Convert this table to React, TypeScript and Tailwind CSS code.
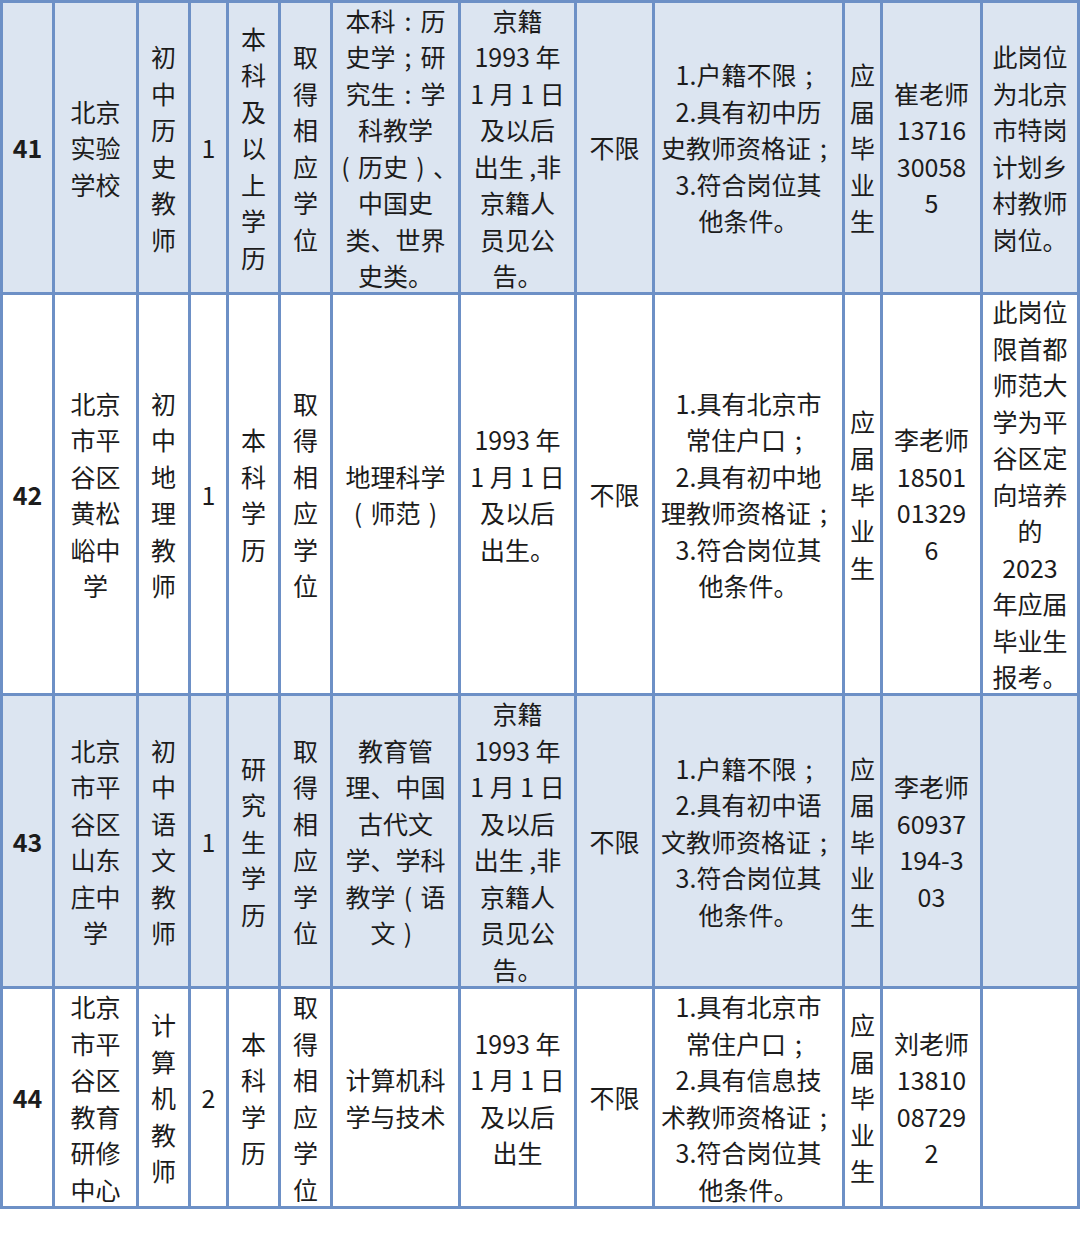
import { Fragment, type ReactNode } from "react";

type Cell = string[];

const chars = (s: string): Cell => s.split("");

interface Row {
  no: string;
  cells: Cell[];
  shaded: boolean;
}

const rows: Row[] = [
  {
    no: "41",
    shaded: true,
    cells: [
      ["北京", "实验", "学校"],
      chars("初中历史教师"),
      ["1"],
      chars("本科及以上学历"),
      chars("取得相应学位"),
      ["本科：历", "史学；研", "究生：学", "科教学", "（历史）、", "中国史", "类、世界", "史类。"],
      ["京籍", "1993 年", "1 月 1 日", "及以后", "出生 ,非", "京籍人", "员见公", "告。"],
      ["不限"],
      ["1.户籍不限；", "2.具有初中历", "史教师资格证；", "3.符合岗位其", "他条件。"],
      chars("应届毕业生"),
      ["崔老师", "13716", "30058", "5"],
      ["此岗位", "为北京", "市特岗", "计划乡", "村教师", "岗位。"],
    ],
  },
  {
    no: "42",
    shaded: false,
    cells: [
      ["北京", "市平", "谷区", "黄松", "峪中", "学"],
      chars("初中地理教师"),
      ["1"],
      chars("本科学历"),
      chars("取得相应学位"),
      ["地理科学", "（师范）"],
      ["1993 年", "1 月 1 日", "及以后", "出生。"],
      ["不限"],
      ["1.具有北京市", "常住户口；", "2.具有初中地", "理教师资格证；", "3.符合岗位其", "他条件。"],
      chars("应届毕业生"),
      ["李老师", "18501", "01329", "6"],
      ["此岗位", "限首都", "师范大", "学为平", "谷区定", "向培养", "的", "2023", "年应届", "毕业生", "报考。"],
    ],
  },
  {
    no: "43",
    shaded: true,
    cells: [
      ["北京", "市平", "谷区", "山东", "庄中", "学"],
      chars("初中语文教师"),
      ["1"],
      chars("研究生学历"),
      chars("取得相应学位"),
      ["教育管", "理、中国", "古代文", "学、学科", "教学（语", "文）"],
      ["京籍", "1993 年", "1 月 1 日", "及以后", "出生 ,非", "京籍人", "员见公", "告。"],
      ["不限"],
      ["1.户籍不限；", "2.具有初中语", "文教师资格证；", "3.符合岗位其", "他条件。"],
      chars("应届毕业生"),
      ["李老师", "60937", "194-3", "03"],
      [],
    ],
  },
  {
    no: "44",
    shaded: false,
    cells: [
      ["北京", "市平", "谷区", "教育", "研修", "中心"],
      chars("计算机教师"),
      ["2"],
      chars("本科学历"),
      chars("取得相应学位"),
      ["计算机科", "学与技术"],
      ["1993 年", "1 月 1 日", "及以后", "出生"],
      ["不限"],
      ["1.具有北京市", "常住户口；", "2.具有信息技", "术教师资格证；", "3.符合岗位其", "他条件。"],
      chars("应届毕业生"),
      ["刘老师", "13810", "08729", "2"],
      [],
    ],
  },
];

// full-width punctuation sits centred in its em box in the source table
const centred: Record<string, string> = { "：": ":", "；": ";", "（": "(", "）": ")" };

function Line({ text }: { text: string }) {
  const parts: ReactNode[] = [];
  let buf = "";
  text.split("").forEach((ch, i) => {
    if (centred[ch]) {
      if (buf) parts.push(buf);
      buf = "";
      parts.push(
        <span key={i} className="inline-block w-[1em] text-center">
          {centred[ch]}
        </span>,
      );
    } else {
      buf += ch;
    }
  });
  if (buf) parts.push(buf);
  return <span className="block whitespace-pre">{parts}</span>;
}

export default function App() {
  return (
    <div className="min-h-[1240px] w-[1080px] bg-white font-['Noto_Sans_CJK_SC',sans-serif] text-[25px] leading-[36.5px] text-[#1c1c1c]">
      <div className="grid grid-cols-[49px_81px_49px_35px_49px_49px_125px_113px_75px_187px_35px_97px_94px] grid-rows-[289px_398px_290px_217px] gap-[3px] bg-[#6d90c6] p-[3px]">
        {rows.map((row) => (
          <Fragment key={row.no}>
            <div
              className={`flex items-center justify-center font-bold ${row.shaded ? "bg-[#dce5f1]" : "bg-white"}`}
            >
              {row.no}
            </div>
            {row.cells.map((lines, i) => (
              <div
                key={i}
                className={`flex flex-col items-center justify-center text-center ${row.shaded ? "bg-[#dce5f1]" : "bg-white"}`}
              >
                {lines.map((line, j) => (
                  <Line key={j} text={line} />
                ))}
              </div>
            ))}
          </Fragment>
        ))}
      </div>
    </div>
  );
}
